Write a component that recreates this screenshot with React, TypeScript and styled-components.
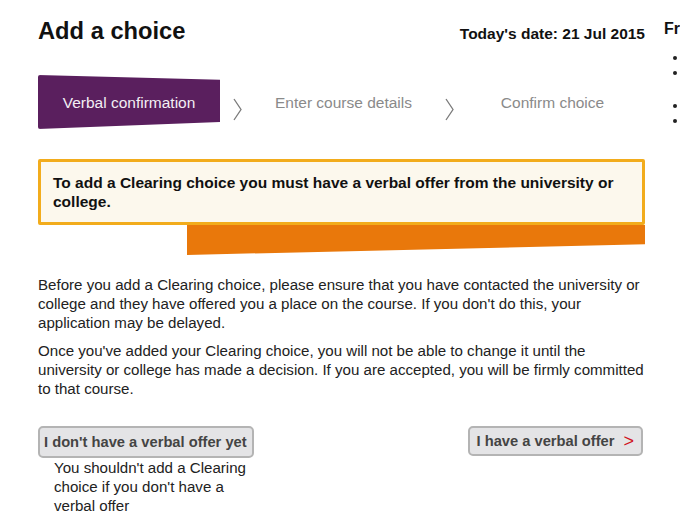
import React from 'react';
import styled, { createGlobalStyle } from 'styled-components';

const GlobalStyle = createGlobalStyle`
  html, body {
    margin: 0;
    padding: 0;
    background: #ffffff;
    overflow: hidden;
  }
  body {
    font-family: "Liberation Sans", Arial, sans-serif;
    color: #222;
  }
`;

const steps = ['Verbal confirmation', 'Enter course details', 'Confirm choice'];

const Chevron: React.FC<{ gap?: number }> = ({ gap = 13 }) => (
  <ChevronIcon $gap={gap} width="9" height="23" viewBox="0 0 9 23">
    <polyline points="1,1 8,11.5 1,22" fill="none" stroke="#7a7a7a" strokeWidth="1.3" />
  </ChevronIcon>
);

const App: React.FC = () => (
  <>
    <GlobalStyle />
    <Page>
      <Main>
        <Header>
          <Title>Add a choice</Title>
          <DateLabel>Today's date: 21 Jul 2015</DateLabel>
        </Header>

        <Steps>
          <ActiveStep>{steps[0]}</ActiveStep>
          <Chevron />
          <Step $width={203}>{steps[1]}</Step>
          <Chevron gap={0} />
          <Step $width={197}>{steps[2]}</Step>
        </Steps>

        <Alert>
          To add a Clearing choice you must have a verbal offer from the university or college.
        </Alert>
        <AlertBand />

        <Copy>
          Before you add a Clearing choice, please ensure that you have contacted the university or
          college and they have offered you a place on the course. If you don't do this, your
          application may be delayed.
        </Copy>
        <Copy>
          Once you've added your Clearing choice, you will not be able to change it until the
          university or college has made a decision. If you are accepted, you will be firmly committed
          to that course.
        </Copy>

        <Actions>
          <ActionColumn>
            <Button>I don't have a verbal offer yet</Button>
            <Note>You shouldn't add a Clearing choice if you don't have a verbal offer</Note>
          </ActionColumn>
          <Button $small>
            I have a verbal offer <Arrow>&gt;</Arrow>
          </Button>
        </Actions>
      </Main>

      <Sidebar>
        <SideTitle>Frequently asked questions</SideTitle>
        <SideList>
          <li>What is Clearing?</li>
          <li>How do I find a course?</li>
        </SideList>
        <SideList>
          <li>Adding a Clearing choice</li>
          <li>Contacting universities</li>
        </SideList>
      </Sidebar>
    </Page>
  </>
);

export default App;

const Page = styled.div`
  display: flex;
  width: 900px;
  padding-left: 38px;
`;

const Main = styled.div`
  width: 607px;
  flex-shrink: 0;
`;

const Header = styled.div`
  display: flex;
  justify-content: space-between;
  align-items: baseline;
  padding-top: 17px;
`;

const Title = styled.h1`
  margin: 0;
  font-size: 23.7px;
  font-weight: bold;
  color: #111;
  line-height: 28px;
`;

const DateLabel = styled.div`
  font-size: 15.5px;
  font-weight: bold;
  color: #111;
`;

const Steps = styled.div`
  display: flex;
  align-items: center;
  margin-top: 30px;
  height: 54px;
`;

const ActiveStep = styled.div`
  width: 182px;
  height: 54px;
  flex-shrink: 0;
  display: flex;
  align-items: center;
  justify-content: center;
  padding-top: 2px;
  box-sizing: border-box;
  background: #5a1f5e;
  color: #f3eef4;
  font-size: 15.5px;
  clip-path: polygon(0 0, 100% 9%, 100% 87%, 0 100%);
  border-radius: 2px;
`;

const ChevronIcon = styled.svg<{ $gap: number }>`
  flex-shrink: 0;
  margin: 14px 0 0 ${(p) => p.$gap}px;
`;

const Step = styled.div<{ $width: number }>`
  width: ${(p) => p.$width}px;
  padding-top: 2px;
  text-align: center;
  color: #8a8a8a;
  font-size: 15.5px;
  flex-shrink: 0;
`;

const Alert = styled.div`
  margin-top: 30px;
  border: 3px solid #f2ac1c;
  border-radius: 2px;
  background: #fcf8ed;
  padding: 11px 24px 11px 12px;
  font-size: 15.5px;
  font-weight: bold;
  line-height: 19px;
  color: #111;
`;

const AlertBand = styled.div`
  margin-left: 149px;
  height: 30px;
  background: #e9780b;
  clip-path: polygon(0 0, 100% 0, 100% 64%, 0 100%);
`;

const Copy = styled.p`
  margin: 20px 0 0;
  font-size: 15.1px;
  line-height: 19px;
  color: #222;

  & + & {
    margin-top: 9px;
  }
`;

const Actions = styled.div`
  display: flex;
  justify-content: space-between;
  align-items: flex-start;
  margin-top: 28px;
  padding-right: 2px;
`;

const ActionColumn = styled.div`
  display: flex;
  flex-direction: column;
`;

const Button = styled.button<{ $small?: boolean }>`
  font-family: "Liberation Sans", Arial, sans-serif;
  font-size: 14.7px;
  font-weight: bold;
  color: #444;
  background: #e4e4e6;
  border: 2px solid #b4b4b4;
  border-radius: 5px;
  height: ${(p) => (p.$small ? 30 : 32)}px;
  padding: 0 ${(p) => (p.$small ? 7 : 4)}px 0 ${(p) => (p.$small ? 7 : 4)}px;
  display: flex;
  align-items: center;
  gap: 9px;
  cursor: pointer;
`;

const Arrow = styled.span`
  color: #d0111d;
  font-size: 18px;
  font-weight: normal;
`;

const Note = styled.div`
  width: 200px;
  margin-left: 16px;
  font-size: 15.1px;
  line-height: 19px;
  color: #222;
`;

const Sidebar = styled.div`
  margin-left: 19px;
  padding-top: 19px;
  white-space: nowrap;
`;

const SideTitle = styled.h2`
  margin: 0;
  font-size: 16px;
  font-weight: bold;
  color: #111;
  line-height: 20px;
`;

const SideList = styled.ul`
  margin: 11px 0 0;
  padding-left: 23px;
  font-size: 12px;
  line-height: 15px;

  & + & {
    margin-top: 18px;
  }
`;
